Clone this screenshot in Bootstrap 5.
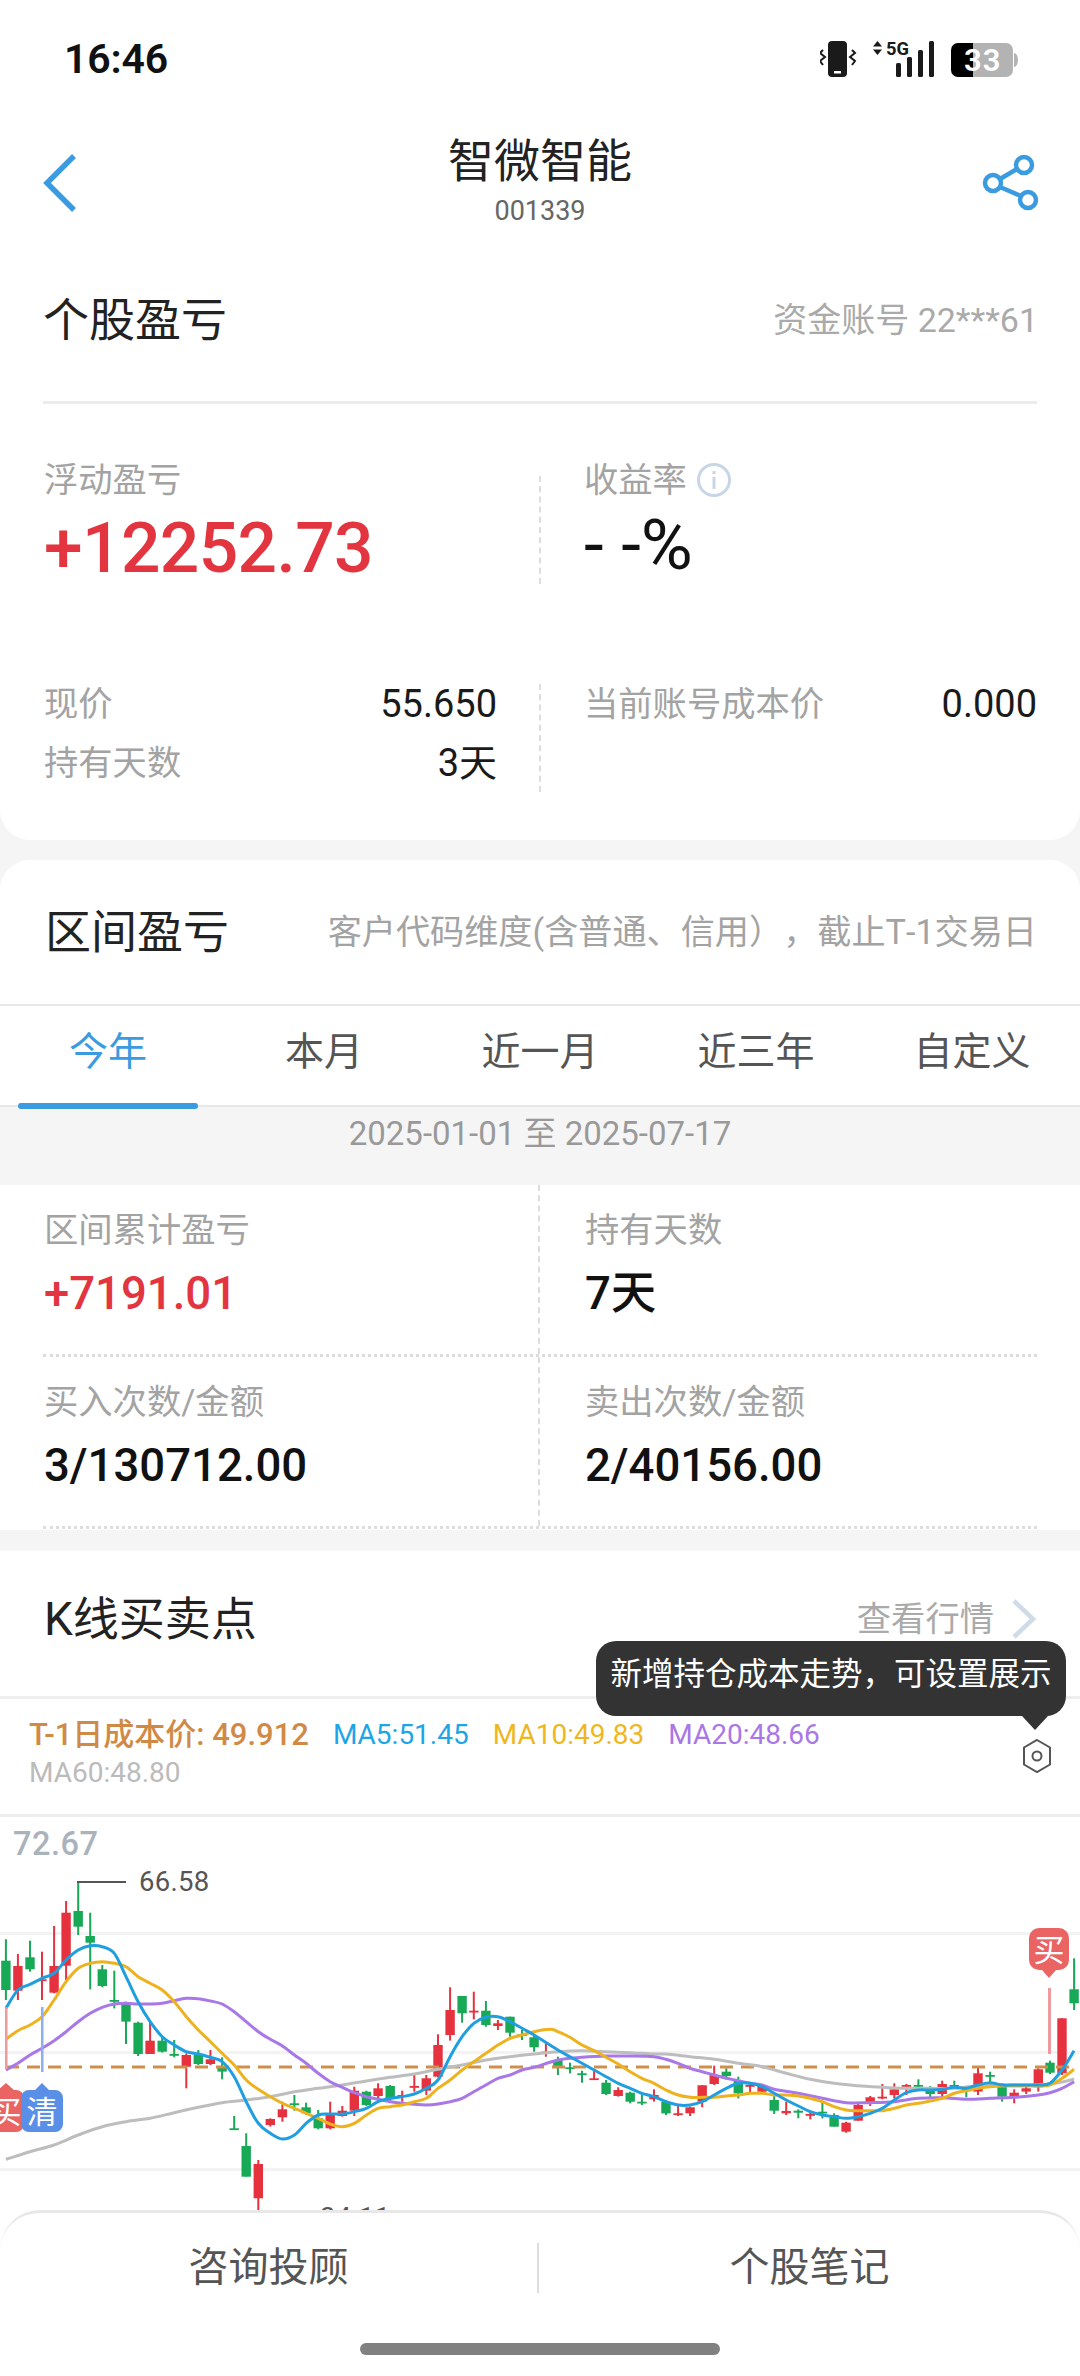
<!DOCTYPE html>
<html lang="zh">
<head>
<meta charset="utf-8">
<title>个股盈亏</title>
<link rel="stylesheet" href="https://cdn.jsdelivr.net/npm/bootstrap@5.3.0/dist/css/bootstrap.min.css">
<style>
html,body{margin:0;background:#f5f5f5}
body{width:1080px;height:2376px;overflow:hidden}
.phone{position:relative;width:1080px;height:2376px;overflow:hidden;background:#f5f5f5;font-family:Roboto,"Noto Sans CJK SC",sans-serif;color:#1a1a1a}
.sheet-one{background:#fff;height:840px;border-radius:0 0 30px 30px}
.status-row{height:114px;padding:4px 60px 0 64px}
.clock{font-size:41px;font-weight:600;line-height:1;letter-spacing:-.2px;color:#111}
.nav-row{height:136px;padding:0 43px;position:relative}
.side-slot{width:60px}
.back-ic{margin-top:39px;display:block}
.share-ic{margin-top:40px;margin-right:-3px;display:block}
.title-wrap{text-align:center;padding-top:19px}
.stock-name{font-size:46px;line-height:56px;color:#222}
.stock-code{font-size:27px;line-height:32px;color:#666;margin-top:6px}
.head-one{height:154px;margin:0 43px;border-bottom:3px solid #ececec}
.sec-title{font-size:46px;line-height:60px;color:#222}
.acct{font-size:34px;line-height:44px;color:#aaa;margin-right:-1px}
.split-row{position:relative;display:flex;padding:0 43px 0 44px}
.split-row::before{content:"";position:absolute;left:539px;border-left:2px dashed #ddd}
.split-a{margin-top:56px;height:124px}
.split-a::before{top:16px;height:108px}
.split-b{margin-top:100px;height:108px}
.split-b::before{top:0;height:108px}
.half-l{width:453px}
.half-r{margin-left:87px;flex:1}
.lbl{font-size:34.300px;line-height:40px;color:#a3a3a3}
.big-num{font-size:69.500px;line-height:84px;margin-top:7px;font-weight:500;letter-spacing:-.6px;color:#111}
.pct-num{font-size:71px;font-weight:400;margin-top:3px;letter-spacing:0}
.kv{font-size:38px;line-height:40px;color:#1a1a1a}
.gap-kv{margin-top:19px}
.info-ic{margin-left:9px;vertical-align:-6px}
.sheet-two{margin-top:20px;background:#fff;border-radius:30px 30px 0 0}
.head-two{height:146px;padding:4px 43px 4px 45px;border-bottom:2px solid #e8e8e8}
.hint{font-size:34.150px;line-height:44px;color:#a3a3a3;white-space:nowrap;text-spacing-trim:space-all;font-kerning:none}
.tabs-bar{height:101px;border-bottom:2px solid #e8e8e8;flex-wrap:nowrap}
.tab-cell{width:216px;text-align:center;font-size:39px;line-height:92px;color:#555;position:relative;padding:0;text-decoration:none}
.tab-cell.on{color:#3a9be0}
.tab-cell.on::after{content:"";position:absolute;left:18px;right:18px;bottom:-4px;height:6px;border-radius:3px;background:#3a9be0}
.date-band{height:78px;background:#f5f5f5;text-align:center;font-size:33px;line-height:54px;color:#999}
.stat-wrap{background:#fff;padding:0 43px;height:345px}
.stat-line{height:172px;border-bottom:3px dotted #ddd}
.stat-l{width:495px;padding-left:1px}
.stat-r{width:499px;padding-left:45px;border-left:2px dashed #ddd}
.stat-top{padding-top:25px}
.stat-v{font-size:45.500px;line-height:56px;margin-top:16px;color:#111;font-weight:500}
.big-num.red-num,.stat-v.red-num{color:#e23540}
.sheet-three{margin-top:21px;background:#fff;height:900px}
.head-three{padding:1px 43px 11px 44px;border-bottom:3px solid #eee;box-sizing:content-box;height:133px}
.more{font-size:34.300px;line-height:44px;color:#aaa}
.chev-ic{margin-left:17px}
.legend-wrap{padding:17px 28px 0 29px;border-bottom:3px solid #eee;box-sizing:content-box;height:98px}
.legend{font-size:28px;line-height:38px;column-gap:24px;width:900px}
.c-cost{color:#d08a45;font-size:31px;font-weight:500}.c-5{color:#1ea5e8}.c-10{color:#eeb71f}.c-20{color:#a877e8}.c-60{color:#bbb}
.chart-svg{display:block}
.hex-ic{margin-top:22px}
.tip-box{position:absolute;left:596px;top:1641px;width:470px;height:75px;border-radius:20px;background:#333;color:#fff;font-size:31.500px;line-height:67px;text-align:center;white-space:nowrap}
.tip-box::after{content:"";position:absolute;left:426px;top:75px;border-style:solid;border-width:14px 13px 0 13px;border-color:#333 transparent transparent transparent}
.dock{position:absolute;left:0;right:0;top:2210px;bottom:0;background:#fff;border-top:3px solid #e8e8e8;border-radius:40px 40px 0 0}
.dock-row{height:94px}
.dock-cell{flex:1;text-align:center;font-size:40px;line-height:50px;color:#555}
.dock-cut{width:2px;height:50px;background:#ddd}
.home-bar{width:360px;height:12px;border-radius:6px;background:#808080;margin:36px auto 0}
</style>
</head>
<body>
<div class="phone">
  <div class="sheet-one">
    <div class="status-row d-flex justify-content-between align-items-center">
      <div class="clock">16:46</div>
      <svg width="200" height="40" viewBox="820 39 200 40">
        <rect x="828" y="41" width="19" height="36" rx="4" fill="#1a1a1a"/>
        <rect x="834" y="71" width="7" height="2.500" fill="#fff"/>
        <path d="M823 50l-3 3 5 4-5 4 3 4M852 50l3 3-5 4 5 4-3 4" fill="none" stroke="#1a1a1a" stroke-width="2"/>
        <path d="M877.500 41l4.500 5.500h-9zM877.500 55l4.500-5.500h-9z" fill="#1a1a1a"/>
        <text x="886" y="55" font-family="Roboto" font-weight="700" font-size="18" fill="#1a1a1a" textLength="23" lengthAdjust="spacingAndGlyphs">5G</text>
        <rect x="896" y="63" width="5" height="14" rx="1.500" fill="#1a1a1a"/>
        <rect x="907" y="57" width="5" height="20" rx="1.500" fill="#1a1a1a"/>
        <rect x="918" y="50" width="5" height="27" rx="1.500" fill="#1a1a1a"/>
        <rect x="929" y="41" width="5" height="36" rx="1.500" fill="#1a1a1a"/>
        <path d="M973 43h33a7 7 0 0 1 7 7v20a7 7 0 0 1-7 7h-33z" fill="#b3b3b3"/>
        <path d="M1014 53a4 7 0 0 1 0 14z" fill="#b3b3b3"/>
        <path d="M973 43h-15a7 7 0 0 0-7 7v20a7 7 0 0 0 7 7h15z" fill="#000"/>
        <text x="964" y="71" font-family="Roboto" font-weight="600" font-size="31" fill="#fff" letter-spacing="1">33</text>
      </svg>
    </div>
    <div class="nav-row d-flex justify-content-between align-items-start">
      <div class="side-slot"><svg class="back-ic" width="36" height="60" viewBox="0 0 36 60"><path d="M31 3L4 30l27 27" fill="none" stroke="#3a9be0" stroke-width="5.500"/></svg></div>
      <div class="title-wrap">
        <div class="stock-name">智微智能</div>
        <div class="stock-code">001339</div>
      </div>
      <div class="side-slot d-flex justify-content-end"><svg class="share-ic" width="58" height="58" viewBox="0 0 58 58">
        <g fill="none" stroke="#3a9be0" stroke-width="4.500">
          <circle cx="11" cy="29" r="8"/><circle cx="42" cy="11" r="8"/><circle cx="46" cy="46" r="8"/>
          <path d="M18 25l17-10M18 33l21 9"/>
        </g>
      </svg></div>
    </div>
    <div class="head-one d-flex justify-content-between align-items-start">
      <div class="sec-title" style="margin-top:40px">个股盈亏</div>
      <div class="acct" style="margin-top:48px">资金账号 22***61</div>
    </div>
    <div class="split-row split-a">
      <div class="half-l">
        <div class="lbl">浮动盈亏</div>
        <div class="big-num red-num">+12252.73</div>
      </div>
      <div class="half-r">
        <div class="lbl">收益率<svg class="info-ic" width="36" height="36" viewBox="0 0 36 36"><circle cx="18" cy="18" r="15.500" fill="none" stroke="#c7d6e6" stroke-width="3"/><path d="M18 15v12M18 9v3" stroke="#c7d6e6" stroke-width="3"/></svg></div>
        <div class="big-num pct-num">- -%</div>
      </div>
    </div>
    <div class="split-row split-b">
      <div class="half-l">
        <div class="d-flex justify-content-between"><span class="lbl">现价</span><span class="kv">55.650</span></div>
        <div class="d-flex justify-content-between gap-kv"><span class="lbl">持有天数</span><span class="kv">3天</span></div>
      </div>
      <div class="half-r">
        <div class="d-flex justify-content-between"><span class="lbl">当前账号成本价</span><span class="kv">0.000</span></div>
      </div>
    </div>
  </div>

  <div class="sheet-two">
    <div class="head-two d-flex justify-content-between align-items-center">
      <div class="sec-title">区间盈亏</div>
      <div class="hint">客户代码维度(含普通、信用），截止T-1交易日</div>
    </div>
    <nav class="nav tabs-bar">
      <a class="tab-cell on" href="#">今年</a>
      <a class="tab-cell" href="#">本月</a>
      <a class="tab-cell" href="#">近一月</a>
      <a class="tab-cell" href="#">近三年</a>
      <a class="tab-cell" href="#">自定义</a>
    </nav>
    <div class="date-band">2025-01-01 至 2025-07-17</div>
    <div class="stat-wrap">
      <div class="d-flex stat-line">
        <div class="stat-l stat-top"><div class="lbl">区间累计盈亏</div><div class="stat-v red-num">+7191.01</div></div>
        <div class="stat-r stat-top"><div class="lbl">持有天数</div><div class="stat-v">7天</div></div>
      </div>
      <div class="d-flex stat-line">
        <div class="stat-l stat-top"><div class="lbl">买入次数/金额</div><div class="stat-v">3/130712.00</div></div>
        <div class="stat-r stat-top"><div class="lbl">卖出次数/金额</div><div class="stat-v">2/40156.00</div></div>
      </div>
    </div>
  </div>

  <div class="sheet-three">
    <div class="head-three d-flex justify-content-between align-items-center">
      <div class="sec-title">K线买卖点</div>
      <div class="d-flex align-items-center">
        <span class="more">查看行情</span>
        <svg class="chev-ic" width="26" height="40" viewBox="0 0 26 40"><path d="M3 2l19 18L3 38" fill="none" stroke="#cfdbe6" stroke-width="4.500"/></svg>
      </div>
    </div>
    <div class="legend-wrap d-flex justify-content-between">
      <div class="legend d-flex flex-wrap align-content-start">
        <span class="c-cost">T-1日成本价: 49.912</span>
        <span class="c-5">MA5:51.45</span>
        <span class="c-10">MA10:49.83</span>
        <span class="c-20">MA20:48.66</span>
        <span class="c-60 w-100">MA60:48.80</span>
      </div>
      <svg class="hex-ic" width="30" height="36" viewBox="0 0 30 36"><path d="M15 2l13 7.500v17L15 34 2 26.500v-17z" fill="none" stroke="#555" stroke-width="2"/><circle cx="15" cy="18" r="4.500" fill="none" stroke="#555" stroke-width="2"/></svg>
    </div>
    <svg id="kchart" class="chart-svg" width="1080" height="420" viewBox="0 1817 1080 420"></svg>
  </div>

  <div class="tip-box">新增持仓成本走势，可设置展示</div>

  <div class="dock">
    <div class="dock-row d-flex align-items-center pt-3">
      <div class="dock-cell">咨询投顾</div>
      <div class="dock-cut"></div>
      <div class="dock-cell" style="flex:0 0 541px">个股笔记</div>
    </div>
    <div class="home-bar"></div>
  </div>
</div>

<script src="https://cdn.jsdelivr.net/npm/bootstrap@5.3.0/dist/js/bootstrap.bundle.min.js"></script>
<script>
(function(){
var R='#e5323e',G='#18a957';
var K=2.904;
var A=[[17,418,600,482,570,G],[52,462,600,498,572,R],[87,422,515,472,508,G],[122,455,600,538,541,R],[157,378,580,498,578,R],[192,303,542,338,497,R],[227,248,405,333,380,G],[262,338,568,408,428,G],[297,495,562,508,558,G],[332,512,625,600,602,G],[366,605,732,610,665,G],[401,665,768,668,762,G],[436,665,762,722,762,R],[471,712,758,722,755,G],[506,720,772,762,765,G],[541,760,865,765,800,R],[576,750,795,765,792,G],[611,750,795,778,792,R],[645,772,838,802,815,G],[680,948,990,985,990,G],[715,1000,1130,1038,1130,G],[750,1080,1236,1092,1195,R],[785,955,980,957,975,R],[820,905,965,928,952,R],[855,885,932,910,915,G],[889,908,945,922,940,G],[924,930,988,955,985,G],[959,905,988,945,985,R],[994,918,950,932,948,R],[1029,860,948,872,932,R],[1064,872,918,875,915,G],[1098,850,900,865,888,R],[1133,855,908,858,895,G],[1168,872,905,885,888,R],[1203,825,875,858,863,R],[1238,825,885,835,872,R],[1272,703,832,735,830,R],[1307,562,722,630,705,R],[1342,588,668,588,640,G],[1376,575,658,632,636,R],[1411,603,680,632,675,G],[1446,660,690,670,678,R],[1481,650,710,650,698,G],[1516,690,720,703,707,G],[1551,705,755,712,742,G]];
var B=[[17,728,770,755,760,R],[52,770,825,780,798,G],[87,788,820,802,805,G],[122,812,848,820,825,G],[157,808,838,835,838,R],[192,840,885,848,882,G],[227,862,890,870,888,R],[262,875,910,878,905,G],[296,880,915,905,908,G],[331,868,905,885,898,R],[366,900,945,905,940,G],[401,915,948,940,943,R],[436,920,948,922,940,R],[471,855,922,856,905,R],[506,797,855,825,852,R],[541,805,838,815,828,G],[576,830,895,842,880,G],[610,850,878,855,858,R],[645,855,880,858,875,R],[680,888,942,900,932,G],[715,905,945,933,940,R],[750,928,955,932,938,G],[785,935,958,942,945,R],[820,905,955,935,938,G],[854,940,980,945,980,G],[889,965,998,968,995,R],[924,912,962,915,962,R],[959,888,918,892,912,R],[994,852,898,890,893,R],[1029,850,895,868,885,R],[1064,852,885,855,860,R],[1099,838,862,855,858,G],[1133,858,892,872,882,G],[1168,842,890,852,882,R],[1203,842,865,855,860,G],[1238,865,892,868,870,G],[1272,800,885,820,875,R],[1307,815,848,825,830,G],[1342,850,905,860,890,G],[1377,868,910,878,890,R],[1412,860,882,865,875,R],[1447,805,875,808,862,R],[1481,782,822,788,818,G],[1516,655,825,655,820,R],[1551,475,630,568,610,G]];
var L=[
 ['#bdbdbd',[17,1078,87,1055,157,1035,227,1005,297,980,366,965,436,955,506,938,576,922,645,908,715,900,785,890,855,875,924,865,994,855,1064,843,1133,832,1203,822,1272,808,1342,795,1411,780,1481,770,1551,762],[52,755,122,752,192,755,262,758,331,762,366,762,436,770,506,778,576,790,645,800,715,820,785,838,854,850,924,857,994,862,1064,865,1133,865,1203,865,1272,857,1342,855,1412,855,1481,852,1551,838]],
 ['#a877e8',[17,810,52,790,87,765,122,745,157,722,192,695,227,665,262,640,297,622,332,612,366,610,401,612,436,612,471,610,506,602,541,595,576,596,611,603,645,612,680,635,715,665,750,695,785,718,820,738,855,765,889,790,924,820,959,845,994,862,1029,878,1064,890,1098,898,1133,905,1168,910,1203,913,1238,915,1272,912,1307,905,1342,895,1376,875,1411,855,1446,835,1481,825,1516,810,1551,802],[52,780,122,772,192,768,262,768,331,770,366,778,401,790,436,805,471,815,506,825,541,835,576,842,610,850,645,855,680,868,750,880,820,895,889,908,959,908,1029,905,1099,895,1168,893,1238,898,1307,895,1377,892,1447,885,1481,878,1516,865,1551,845]],
 ['#eeb21f',[17,718,52,692,87,675,122,650,157,600,192,545,227,505,262,490,297,485,332,490,366,500,401,530,436,550,471,570,506,605,541,650,576,690,611,725,645,760,680,795,715,840,750,868,785,890,820,910,855,925,889,940,924,955,959,972,994,980,1029,970,1064,945,1098,925,1133,920,1168,915,1203,905,1238,895,1272,865,1307,840,1342,810,1376,785,1411,760,1446,735,1481,715,1516,705,1551,695],[30,688,52,695,87,712,122,735,157,752,192,772,227,792,262,815,296,835,331,850,366,870,401,885,436,892,471,892,506,892,541,888,576,885,610,880,645,880,680,885,715,885,750,888,785,895,820,905,854,920,889,930,924,932,959,932,994,932,1029,925,1064,915,1099,910,1133,903,1168,895,1203,880,1238,872,1272,865,1307,860,1342,858,1377,858,1412,858,1447,858,1481,855,1516,835,1551,808]],
 ['#1f9fe0',[17,625,52,570,87,553,122,535,157,520,192,480,227,450,262,437,297,440,332,460,366,530,401,605,436,665,471,710,506,735,541,755,576,762,611,772,645,785,680,830,715,905,750,970,785,1000,820,1017,855,1005,889,970,924,945,959,942,994,942,1029,935,1064,925,1098,905,1133,895,1168,890,1203,882,1238,865,1272,840,1307,770,1342,710,1376,670,1411,652,1446,650,1481,665,1516,685,1551,705],[52,750,87,770,122,790,157,810,192,830,227,850,262,865,296,880,331,890,366,905,401,915,436,915,471,905,506,885,541,865,576,850,610,850,645,860,680,880,715,900,750,918,785,935,820,945,854,950,889,955,924,950,959,940,994,925,1029,900,1064,878,1099,870,1133,870,1168,868,1203,862,1238,865,1272,855,1307,848,1342,855,1377,855,1412,855,1447,855,1481,850,1516,810,1551,752]]
];
function y(v){return 1800+v/3}
var s='';
[1933,2052,2169].forEach(function(v){s+='<rect x="0" y="'+(v-1)+'" width="1080" height="3" fill="#f3f3f3"/>';});
s+='<text x="13" y="1855" font-family="Roboto,sans-serif" font-size="32.500" font-weight="500" letter-spacing=".5" fill="#aab3bc">72.67</text>';
function candles(arr,base){arr.forEach(function(c){
  var x=base+c[0]/K;
  s+='<rect x="'+(x-1).toFixed(1)+'" y="'+y(c[1]).toFixed(1)+'" width="2" height="'+((c[2]-c[1])/3).toFixed(1)+'" fill="'+c[5]+'"/>';
  s+='<rect x="'+(x-4.7).toFixed(1)+'" y="'+y(c[3]).toFixed(1)+'" width="9.400" height="'+Math.max(1.8,(c[4]-c[3])/3).toFixed(1)+'" fill="'+c[5]+'"/>';
});}
candles(A,0);candles(B,540);
s+='<line x1="6" y1="2067" x2="1074" y2="2067" stroke="#cf8f4a" stroke-width="3" stroke-dasharray="13 8"/>';
L.forEach(function(l){
  var p=[],i;
  for(i=0;i<l[1].length;i+=2)p.push([l[1][i]/K,y(l[1][i+1])]);
  for(i=0;i<l[2].length;i+=2)p.push([540+l[2][i]/K,y(l[2][i+1])]);
  var d='M'+p[0][0].toFixed(1)+' '+p[0][1].toFixed(1);
  for(i=0;i<p.length-1;i++){
    var a=p[Math.max(0,i-1)],b=p[i],c=p[i+1],e=p[Math.min(p.length-1,i+2)];
    d+='C'+(b[0]+(c[0]-a[0])/6).toFixed(1)+' '+(b[1]+(c[1]-a[1])/6).toFixed(1)+' '+(c[0]-(e[0]-b[0])/6).toFixed(1)+' '+(c[1]-(e[1]-b[1])/6).toFixed(1)+' '+c[0].toFixed(1)+' '+c[1].toFixed(1);
  }
  s+='<path d="'+d+'" fill="none" stroke="'+l[0]+'" stroke-width="3" stroke-linejoin="round"/>';
});
s+='<path d="M78 1883V1882H126" fill="none" stroke="#555" stroke-width="2"/>';
s+='<text x="139" y="1891" font-family="Roboto,sans-serif" font-size="27.500" letter-spacing=".3" fill="#555">66.58</text>';
s+='<text x="320" y="2227" font-family="Roboto,sans-serif" font-size="27.500" letter-spacing=".3" fill="#555">34.11</text>';
s+='<rect x="5" y="2007" width="2.500" height="62" fill="#ee9a9e"/><rect x="41" y="2007" width="2.500" height="65" fill="#8cb0ee"/>';
s+='<rect x="1048" y="1988" width="3" height="66" fill="#ee9a9e"/>';
s+='<path d="M-14 2090h12l8-7 8 7h2a8 8 0 0 1 8 8v26a8 8 0 0 1-8 8h-30z" fill="#ea6464"/>';
s+='<text x="6" y="2123" text-anchor="middle" font-family="Noto Sans CJK SC,sans-serif" font-size="31" fill="#fff">买</text>';
s+='<path d="M29 2090h6l7-7 7 7h6a8 8 0 0 1 8 8v26a8 8 0 0 1-8 8H29a8 8 0 0 1-8-8v-26a8 8 0 0 1 8-8z" fill="#5a8fe8"/>';
s+='<text x="42" y="2123" text-anchor="middle" font-family="Noto Sans CJK SC,sans-serif" font-size="31" fill="#fff">清</text>';
s+='<path d="M1039 1928h20a10 10 0 0 1 10 10v22a10 10 0 0 1-10 10h-3l-7 8-7-8h-3a10 10 0 0 1-10-10v-22a10 10 0 0 1 10-10z" fill="#ea6464"/>';
s+='<text x="1049" y="1961" text-anchor="middle" font-family="Noto Sans CJK SC,sans-serif" font-size="31" fill="#fff">买</text>';
document.getElementById('kchart').innerHTML=s;
})();
</script>
</body>
</html>
